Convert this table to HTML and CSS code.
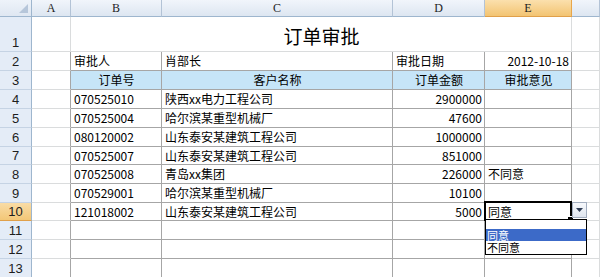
FILE: index.html
```html
<!DOCTYPE html>
<html>
<head>
<meta charset="utf-8">
<link rel="stylesheet" href="styles.css">
</head>
<body>
<div class="sheet">
  <div class="corner"><span class="tri"></span></div>
  <div class="ch">A</div><div class="ch">B</div><div class="ch">C</div><div class="ch">D</div><div class="ch on">E</div><div class="ch"></div>

  <div class="rh tall">1</div><div class="c"></div><div class="c title">订单审批</div><div class="c"></div>

  <div class="rh">2</div><div class="c ta"></div><div class="c t">审批人</div><div class="c t">肖部长</div><div class="c t">审批日期</div><div class="c t r">2012-10-18</div><div class="c"></div>

  <div class="rh">3</div><div class="c ta"></div><div class="c t hd">订单号</div><div class="c t hd">客户名称</div><div class="c t hd">订单金额</div><div class="c t hd">审批意见</div><div class="c"></div>

  <div class="rh">4</div><div class="c ta"></div><div class="c t">070525010</div><div class="c t">陕西xx电力工程公司</div><div class="c t r">2900000</div><div class="c t"></div><div class="c"></div>

  <div class="rh">5</div><div class="c ta"></div><div class="c t">070525004</div><div class="c t">哈尔滨某重型机械厂</div><div class="c t r">47600</div><div class="c t"></div><div class="c"></div>

  <div class="rh">6</div><div class="c ta"></div><div class="c t">080120002</div><div class="c t">山东泰安某建筑工程公司</div><div class="c t r">1000000</div><div class="c t"></div><div class="c"></div>

  <div class="rh">7</div><div class="c ta"></div><div class="c t">070525007</div><div class="c t">山东泰安某建筑工程公司</div><div class="c t r">851000</div><div class="c t"></div><div class="c"></div>

  <div class="rh">8</div><div class="c ta"></div><div class="c t">070525008</div><div class="c t">青岛xx集团</div><div class="c t r">226000</div><div class="c t">不同意</div><div class="c"></div>

  <div class="rh">9</div><div class="c ta"></div><div class="c t">070529001</div><div class="c t">哈尔滨某重型机械厂</div><div class="c t r">10100</div><div class="c t"></div><div class="c"></div>

  <div class="rh on">10</div><div class="c ta"></div><div class="c t">121018002</div><div class="c t">山东泰安某建筑工程公司</div><div class="c t r">5000</div>
  <div class="c t active">同意
    <div class="selbox"><span class="handle"></span></div>
    <div class="ddbtn"><svg width="7" height="4" viewBox="0 0 7 4"><path d="M0 0H7L3.5 4Z" fill="#2f3d55"/></svg></div>
    <div class="ddlist">
      <div class="opt hi">同意</div>
      <div class="opt">不同意</div>
    </div>
  </div>
  <div class="c"></div>

  <div class="rh">11</div><div class="c ta"></div><div class="c t"></div><div class="c t"></div><div class="c t"></div><div class="c t"></div><div class="c"></div>

  <div class="rh">12</div><div class="c ta"></div><div class="c t"></div><div class="c t"></div><div class="c t"></div><div class="c t"></div><div class="c"></div>

  <div class="rh">13</div><div class="c ta"></div><div class="c t"></div><div class="c t"></div><div class="c t"></div><div class="c t"></div><div class="c"></div>
</div>
</body>
</html>
```

FILE: styles.css
```css
html, body {
  margin: 0;
  padding: 0;
  background: #ffffff;
  overflow: hidden;
}

.sheet {
  display: grid;
  grid-template-columns: 32px 39px 91px 231px 92px 87px 28px;
  grid-template-rows: 17px 35px 19px 19px 19px 19px 19px 18px 19px 19px 18px 19px 19px 19px;
  font-family: "Noto Sans CJK SC", sans-serif;
  font-size: 12px;
  color: #000;
  width: 600px;
}

.sheet > div {
  box-sizing: border-box;
}

.corner {
  background: linear-gradient(#eef3fa, #dfe7f2);
  border-right: 1px solid #9eb6ce;
  border-bottom: 1px solid #9eb6ce;
  position: relative;
}

.tri {
  position: absolute;
  right: 3px;
  bottom: 3px;
  width: 0;
  height: 0;
  border-left: 9px solid transparent;
  border-bottom: 9px solid #b6c6da;
}

.ch {
  display: flex;
  align-items: center;
  justify-content: center;
  background: linear-gradient(#f1f5fb, #dde6f1);
  border-right: 1px solid #b3c3d6;
  border-bottom: 1px solid #9eb6ce;
  font-family: "Liberation Serif", "DejaVu Serif", serif;
  font-size: 12px;
  color: #1d1d1d;
}

.ch.on {
  background: linear-gradient(#fbe0ad, #f3c472);
  border-right: 1px solid #e8a64a;
  border-bottom: 1px solid #e0a04a;
}

.rh {
  display: flex;
  align-items: center;
  justify-content: center;
  background: #e4ecf7;
  border-right: 1px solid #9eb6ce;
  border-bottom: 1px solid #c5d3e4;
  font-family: "Liberation Sans", "DejaVu Sans", sans-serif;
  font-size: 13px;
  color: #1d1d1d;
}

.rh.tall {
  align-items: flex-end;
  padding-bottom: 1px;
}

.rh.on {
  background: linear-gradient(#f9dca6, #f3c777);
  border-bottom: 1px solid #e0a04a;
}

.c {
  display: flex;
  align-items: center;
  padding: 0 2px 0 3px;
  border-right: 1px solid #dadcdd;
  border-bottom: 1px solid #dadcdd;
  white-space: nowrap;
  line-height: 1;
}

.c.ta {
  border-right-color: #a6a6a6;
}

.c.t {
  border-right-color: #a6a6a6;
  border-bottom-color: #a6a6a6;
}

.c.r {
  justify-content: flex-end;
}

.c.hd {
  justify-content: center;
  background: #c6e5f8;
}

.title {
  grid-column: span 4;
  justify-content: center;
  font-size: 19px;
  padding-top: 3px;
}

.active {
  position: relative;
}

.selbox {
  position: absolute;
  left: -1px;
  top: -2px;
  right: -1px;
  bottom: -1px;
  border: 2px solid #000;
  pointer-events: none;
}

.handle {
  position: absolute;
  right: -4px;
  bottom: -4px;
  width: 5px;
  height: 5px;
  background: #000;
  border: 1px solid #fff;
}

.ddbtn {
  position: absolute;
  left: 87px;
  top: -1px;
  width: 15px;
  height: 16px;
  box-sizing: border-box;
  border: 1px solid #a3aebf;
  background: linear-gradient(#f7f9fc, #dfe5ee);
  display: flex;
  align-items: center;
  justify-content: center;
}

.ddlist {
  position: absolute;
  left: 0;
  top: 16px;
  width: 102px;
  height: 36px;
  box-sizing: border-box;
  border: 1px solid #000;
  background: #fff;
  padding-top: 9px;
  z-index: 2;
}

.opt {
  display: flex;
  align-items: center;
  height: 12px;
  font-size: 11px;
  line-height: 1;
  padding-left: 1px;
}

.opt.hi {
  background: #3c6ac8;
  color: #fff;
}
```
